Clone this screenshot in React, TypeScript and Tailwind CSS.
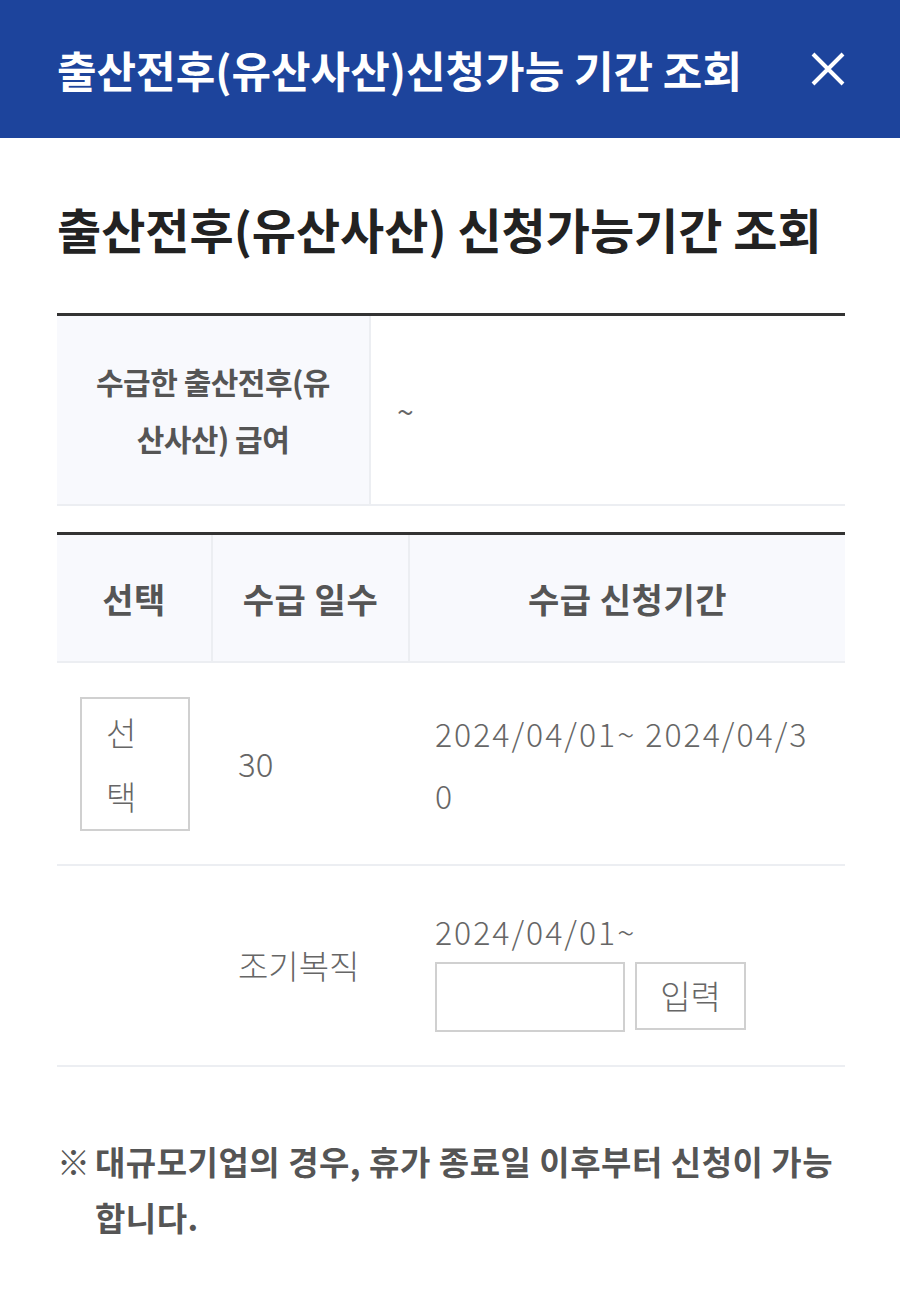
import React from 'react'

const font = { fontFamily: '"Noto Sans CJK KR", "Noto Sans", sans-serif' }

function CloseIcon() {
  return (
    <svg width="34" height="34" viewBox="0 0 34 34" fill="none">
      <path d="M2 2L32 32M32 2L2 32" stroke="white" strokeWidth="4" />
    </svg>
  )
}

export default function App() {
  return (
    <div className="min-h-[1299px] w-[900px] bg-white" style={font}>
      <header className="flex h-[138px] items-center justify-between bg-[#1d449c] pr-[55px] pl-[57px]">
        <h1 className="text-[43px] font-bold text-white">
          출산전후(유산사산)신청가능 기간 조회
        </h1>
        <button type="button" aria-label="닫기">
          <CloseIcon />
        </button>
      </header>

      <main className="pt-[58px] pr-[55px] pl-[57px]">
        <h2 className="text-[48px] leading-[64px] font-bold text-[#222]">
          출산전후(유산사산) 신청가능기간 조회
        </h2>

        <div className="mt-[53px] border-t-[3px] border-[#333]">
          <div className="grid h-[190px] grid-cols-[314px_1fr] border-b-2 border-[#eceef2]">
            <div className="flex items-center justify-center border-r-2 border-[#eceef2] bg-[#f8f9fd] px-[30px] text-center text-[30px] leading-[57px] font-bold tracking-[-0.5px] text-[#555]">
              수급한 출산전후(유산사산) 급여
            </div>
            <div className="flex items-center px-[26px] text-[30px] text-[#666]">
              ~
            </div>
          </div>
        </div>

        <div className="mt-[26px] border-t-[3px] border-[#333]">
          <div className="grid h-[128px] grid-cols-[156px_197px_1fr] border-b-2 border-[#eceef2] bg-[#f8f9fd] text-[34px] font-bold tracking-[0.5px] text-[#555]">
            <div className="flex items-center justify-center border-r-2 border-[#eceef2]">
              선택
            </div>
            <div className="flex items-center justify-center border-r-2 border-[#eceef2]">
              수급 일수
            </div>
            <div className="flex items-center justify-center">수급 신청기간</div>
          </div>

          <div className="grid h-[203px] grid-cols-[156px_197px_1fr] border-b-2 border-[#eceef2] text-[33px] font-light text-[#666]">
            <div className="flex items-center pl-[23px]">
              <button
                type="button"
                className="h-[134px] w-[110px] border-2 border-[#d0d0d0] px-[24px] text-left leading-[64px]"
              >
                선택
              </button>
            </div>
            <div className="flex items-center pl-[25px]">30</div>
            <div className="flex items-center pr-[25px] pl-[25px]">
              <p className="text-[32px] leading-[62px] tracking-[2px] break-all">
                2024/04/01~ 2024/04/30
              </p>
            </div>
          </div>

          <div className="grid h-[201px] grid-cols-[156px_197px_1fr] border-b-2 border-[#eceef2] text-[33px] font-light text-[#666]">
            <div />
            <div className="flex items-center pl-[25px]">조기복직</div>
            <div className="flex flex-col justify-center pl-[25px]">
              <p className="text-[32px] leading-[62px] tracking-[2px]">
                2024/04/01~
              </p>
              <div className="flex gap-[10px]">
                <input
                  type="text"
                  className="h-[70px] w-[190px] border-2 border-[#d0d0d0] px-2 outline-none"
                />
                <button
                  type="button"
                  className="h-[68px] w-[111px] border-2 border-[#d0d0d0]"
                >
                  입력
                </button>
              </div>
            </div>
          </div>
        </div>

        <div className="mt-[66px] flex text-[33px] leading-[56px] font-bold tracking-[0.5px] text-[#555]">
          <span className="w-[38px] shrink-0">※</span>
          <p>대규모기업의 경우, 휴가 종료일 이후부터 신청이 가능 합니다.</p>
        </div>
      </main>
    </div>
  )
}
